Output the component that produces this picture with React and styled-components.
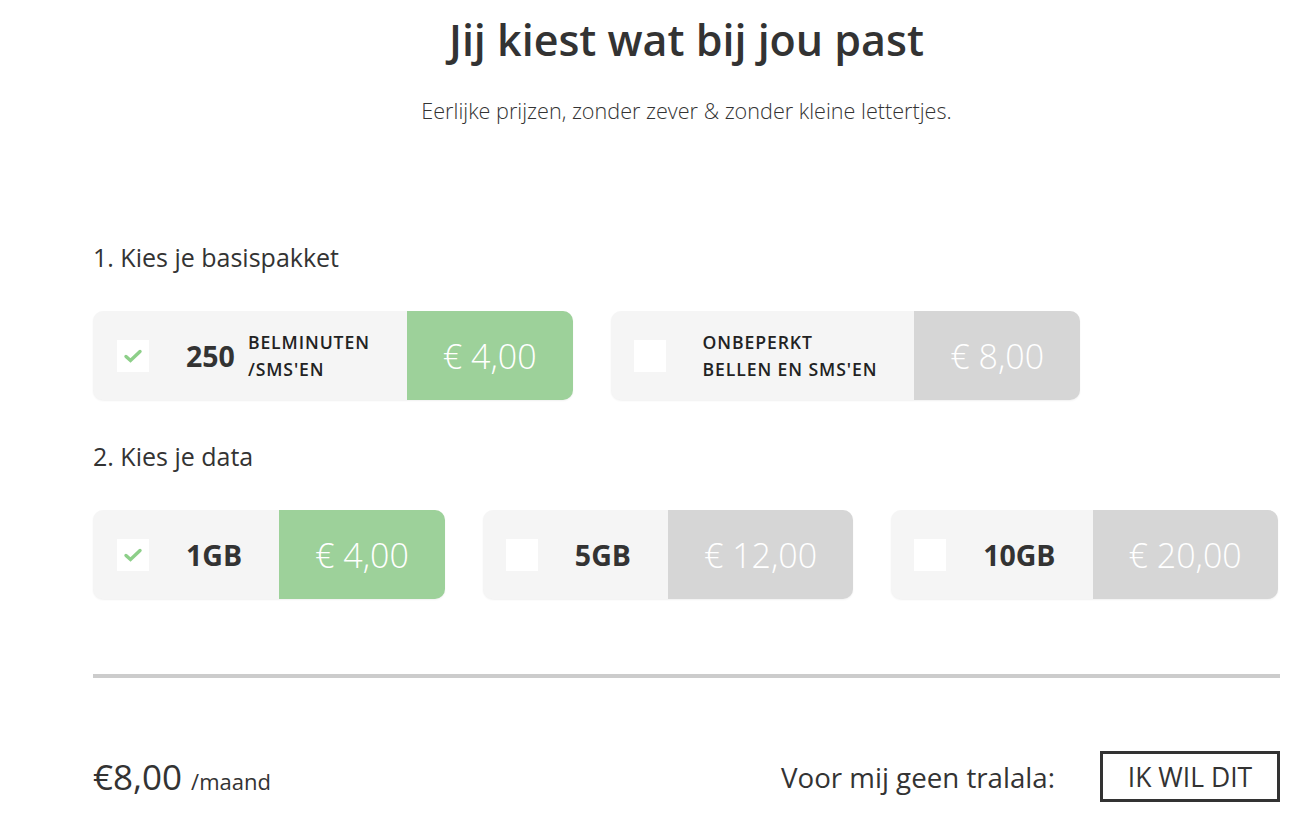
import React from 'react'
import styled, { createGlobalStyle } from 'styled-components'

const GlobalStyle = createGlobalStyle`
  body {
    margin: 0;
    background: #fff;
    font-family: "Open Sans", "Liberation Sans", sans-serif;
    color: #333;
  }
`

const Page = styled.div`
  width: 1187px;
  margin-left: 93px;
  padding-top: 16px;
`

const Title = styled.h1`
  margin: 0;
  text-align: center;
  font-size: 43px;
  line-height: 48px;
  font-weight: 600;
  color: #333;
`

const Subtitle = styled.p`
  margin: 33px 0 0;
  text-align: center;
  font-size: 21.6px;
  line-height: 28px;
  font-weight: 300;
`

const StepTitle = styled.h3`
  margin: ${p => p.$top}px 0 39px;
  font-size: 25px;
  line-height: 30px;
  font-weight: 400;
`

const Options = styled.div`
  display: flex;
  flex-wrap: nowrap;
  gap: 38px;
`

const Card = styled.div`
  display: flex;
  flex-shrink: 0;
  align-items: stretch;
  height: 89px;
  background: #f5f5f5;
  border-radius: 10px;
  overflow: hidden;
  box-shadow: 0 1px 2px rgba(0, 0, 0, 0.06);
  cursor: pointer;
`

const Check = styled.span`
  align-self: center;
  width: 32px;
  height: 32px;
  margin-left: ${p => p.$left}px;
  background: #fff;
  display: flex;
  align-items: center;
  justify-content: center;
`

const Info = styled.div`
  display: flex;
  align-items: center;
  gap: 13px;
  margin: 0 37px;
`

const Amount = styled.span`
  font-size: 28.5px;
  font-weight: 700;
  color: #333;
`

const Label = styled.span`
  font-size: 17.6px;
  line-height: 27px;
  font-weight: 600;
  letter-spacing: 0.9px;
  text-transform: uppercase;
  color: #222;
`

const Price = styled.div`
  display: flex;
  align-items: center;
  padding: 0 36px;
  background: ${p => (p.$active ? '#9dd19a' : '#d6d6d6')};
  color: #fff;
  font-size: 34px;
  font-weight: 300;
  white-space: nowrap;
`

const Divider = styled.hr`
  margin: 75px 0 0;
  border: 0;
  height: 4px;
  background: #cccccc;
`

const Footer = styled.div`
  display: flex;
  align-items: center;
  justify-content: space-between;
  margin-top: 73px;
`

const Total = styled.div`
  font-size: 35px;
  font-weight: 400;
  small {
    font-size: 22px;
    margin-left: 9px;
  }
`

const Order = styled.div`
  display: flex;
  align-items: center;
  gap: 45px;
  font-size: 27.7px;
`

const Button = styled.button`
  height: 51px;
  width: 180px;
  border: 3px solid #333;
  background: #fff;
  font-family: inherit;
  font-size: 26.5px;
  color: #333;
  cursor: pointer;
`

const Tick = () => (
  <svg width="20" height="16" viewBox="0 0 20 16">
    <path d="M3 8.5 L7.5 12.5 L17 3.5" fill="none" stroke="#8dcf89" strokeWidth="3.4" strokeLinecap="round" />
  </svg>
)

const Option = ({ active, left = 24, amount, label, price }) => (
  <Card>
    <Check $left={left}>{active && <Tick />}</Check>
    <Info>
      {amount && <Amount>{amount}</Amount>}
      {label && <Label>{label}</Label>}
    </Info>
    <Price $active={active}>{price}</Price>
  </Card>
)

const App = () => (
  <Page>
    <GlobalStyle />
    <Title>Jij kiest wat bij jou past</Title>
    <Subtitle>Eerlijke prijzen, zonder zever &amp; zonder kleine lettertjes.</Subtitle>

    <StepTitle $top={117}>1. Kies je basispakket</StepTitle>
    <Options>
      <Option active amount="250" label={<>Belminuten<br />/sms'en</>} price="€ 4,00" />
      <Option left={23} label={<>Onbeperkt<br />bellen en sms'en</>} price="€ 8,00" />
    </Options>

    <StepTitle $top={41}>2. Kies je data</StepTitle>
    <Options>
      <Option active amount="1GB" price="€ 4,00" />
      <Option left={23} amount="5GB" price="€ 12,00" />
      <Option left={23} amount="10GB" price="€ 20,00" />
    </Options>

    <Divider />

    <Footer>
      <Total>€8,00<small>/maand</small></Total>
      <Order>
        Voor mij geen tralala:
        <Button>IK WIL DIT</Button>
      </Order>
    </Footer>
  </Page>
)

export default App
